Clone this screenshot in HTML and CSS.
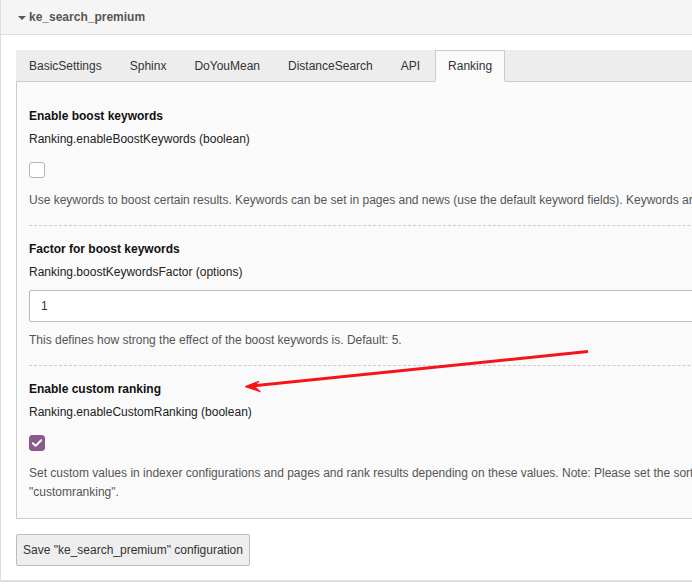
FILE: index.html
```html
<!DOCTYPE html>
<html>
<head>
<meta charset="utf-8">
<link rel="stylesheet" href="styles.css">
</head>
<body>
<div class="ext-panel">
  <div class="ext-header"><span class="caret"></span>ke_search_premium</div>
  <div class="ext-body">
    <ul class="tabs">
      <li class="tab">BasicSettings</li>
      <li class="tab">Sphinx</li>
      <li class="tab">DoYouMean</li>
      <li class="tab">DistanceSearch</li>
      <li class="tab">API</li>
      <li class="tab active">Ranking</li>
    </ul>
    <div class="tab-pane">
      <div class="group">
        <div class="g-title">Enable boost keywords</div>
        <div class="g-key">Ranking.enableBoostKeywords (boolean)</div>
        <div class="check"></div>
        <div class="g-desc">Use keywords to boost certain results. Keywords can be set in pages and news (use the default keyword fields). Keywords are weighted higher.</div>
      </div>
      <div class="group">
        <div class="g-title">Factor for boost keywords</div>
        <div class="g-key">Ranking.boostKeywordsFactor (options)</div>
        <div class="input">1</div>
        <div class="g-desc tight">This defines how strong the effect of the boost keywords is. Default: 5.</div>
      </div>
      <div class="group last">
        <div class="g-title">Enable custom ranking</div>
        <div class="g-key">Ranking.enableCustomRanking (boolean)</div>
        <div class="check on"><svg width="16" height="16" viewBox="0 0 16 16"><path d="M3.8 8.2 L6.6 10.9 L12.2 5.3" fill="none" stroke="#fff" stroke-width="2" stroke-linecap="round" stroke-linejoin="round"/></svg></div>
        <div class="g-desc">Set custom values in indexer configurations and pages and rank results depending on these values. Note: Please set the sorting in your plugin to "customranking".</div>
      </div>
    </div>
    <button class="save">Save "ke_search_premium" configuration</button>
  </div>
</div>
<svg class="arrow" width="692" height="584" viewBox="0 0 692 584">
  <line x1="588" y1="351.5" x2="252" y2="386" stroke="#f5141a" stroke-width="3"/>
  <path d="M245 386.6 L259 381.2 L254.5 386.2 L260.5 391.8 Z" fill="#f5141a" stroke="#f5141a" stroke-width="1" stroke-linejoin="round"/>
</svg>
</body>
</html>
```
FILE: styles.css
```css
html, body {
  margin: 0;
  padding: 0;
  background: #fff;
  overflow: hidden;
}
body {
  font-family: "Liberation Sans", Arial, sans-serif;
  font-size: 12px;
  color: #333;
  width: 692px;
  height: 584px;
  position: relative;
}
.ext-panel {
  width: 857px;
  border-left: 1px solid #ddd;
  border-bottom: 2px solid #ddd;
}
.ext-header {
  height: 34px;
  line-height: 31px;
  background: #f5f5f5;
  border-bottom: 1px solid #ddd;
  font-weight: bold;
  color: #555;
  padding-left: 17px;
  display: flex;
  align-items: center;
}
.caret {
  display: inline-block;
  width: 0;
  height: 0;
  border-left: 4px solid transparent;
  border-right: 4px solid transparent;
  border-top: 4px solid #555;
  margin-right: 3px;
  margin-top: 1px;
}
.ext-body {
  padding: 15px 15px 14px 15px;
}
.tabs {
  list-style: none;
  margin: 0;
  padding: 0;
  display: flex;
  background: #ededed;
  border-bottom: 1px solid #ccc;
}
.tab {
  border: 1px solid transparent;
  padding: 7px 12px 7px 12px;
  line-height: 16px;
  margin-right: 2px;
  margin-bottom: -1px;
  color: #333;
}
.tab.active {
  background: #fafafa;
  border-color: #ccc;
  border-bottom-color: #fafafa;
}
.tab-pane {
  background: #fafafa;
  border: 1px solid #ccc;
  border-top: none;
  padding: 11px 12px 0 12px;
}
.group {
  padding: 14px 0 15px 0;
  border-bottom: 1px dashed #ccc;
}
.group.last {
  border-bottom: none;
  padding-bottom: 16px;
}
.g-title {
  font-weight: bold;
  color: #111;
  line-height: 18px;
}
.g-key {
  margin-top: 5px;
  line-height: 18px;
  color: #222;
}
.check {
  width: 14px;
  height: 14px;
  border: 1px solid #b5b5b5;
  border-radius: 3px;
  background: #fff;
  margin-top: 14px;
}
.check.on {
  background: #8a5a8c;
  border-color: #8a5a8c;
  display: flex;
  align-items: center;
  justify-content: center;
}
.check.on svg {
  flex: none;
}
.g-desc {
  margin-top: 13px;
  line-height: 19px;
  color: #555;
}
.g-desc.tight {
  margin-top: 9px;
}
.input {
  margin-top: 9px;
  height: 30px;
  line-height: 30px;
  border: 1px solid #bbb;
  border-radius: 2px;
  background: #fff;
  padding-left: 11px;
  color: #333;
}
.save {
  margin-top: 15px;
  font-family: "Liberation Sans", Arial, sans-serif;
  font-size: 12px;
  color: #333;
  background: #eee;
  border: 1px solid #bbb;
  border-radius: 2px;
  height: 32px;
  padding: 0 6px;
  line-height: 30px;
}
.arrow {
  position: absolute;
  left: 0;
  top: 0;
  pointer-events: none;
}
```
